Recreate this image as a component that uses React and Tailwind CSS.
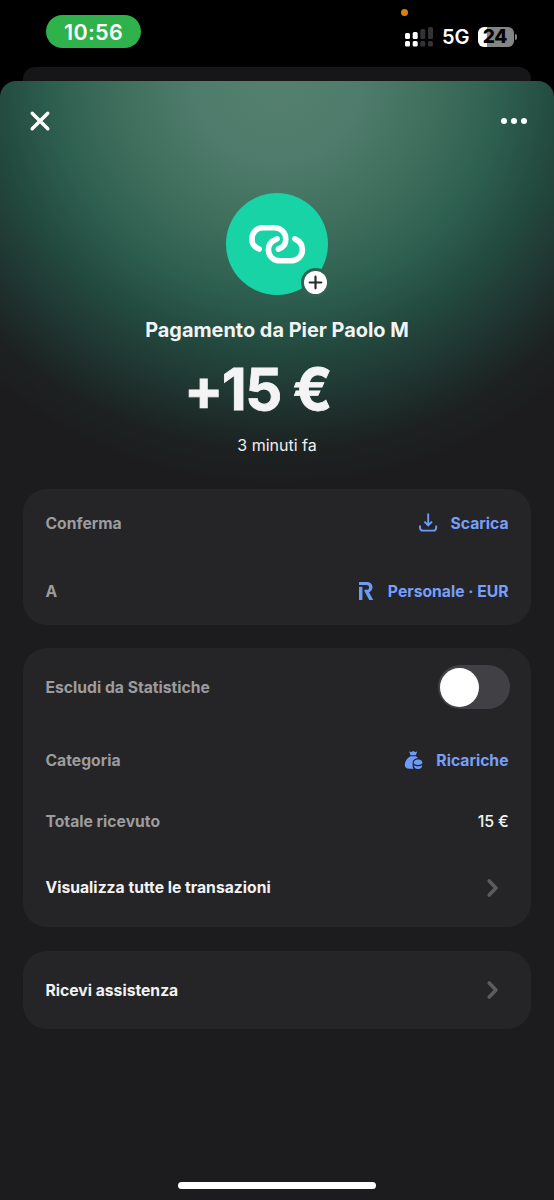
import React, { useState } from "react";

const LinkIcon = () => (
  <svg className="ml-[1px]" width="60" height="44" viewBox="0 0 60 44" fill="none" stroke="#fff" strokeWidth="5.6" strokeLinecap="round">
    <path d="M11.2 27C7.2 25.4 3.9 22.2 3.9 17.2C3.9 10.6 8.6 5.8 15.2 5.8H26C33 5.8 37.8 10.6 37.8 17.2C37.8 22 35.2 25.4 30.4 27" />
    <path d="M29 16.8C24.2 18.6 20.4 22.2 20.4 27.4C20.4 34.2 25.2 38.8 32.2 38.8H42.2C49.2 38.8 54.4 34.4 54.4 28C54.4 22.6 51.2 18.6 46.8 16.8" />
  </svg>
);

const DownloadIcon = () => (
  <svg width="20" height="20" viewBox="0 0 20 20" fill="none" stroke="#6f9bf8" strokeWidth="1.9">
    <path d="M10.2 .6V12M6.4 8.6L10.2 12.3L14 8.6" />
    <path d="M2 12.4V14.4C2 16.8 3 17.6 5 17.6H15.2C17.2 17.6 18.2 16.8 18.2 14.4V12.4" />
  </svg>
);

const RevolutIcon = () => (
  <svg width="16" height="20" viewBox="0 0 16 20" fill="#6f9bf8">
    <path d="M1 5.8H4.4V19H1Z" />
    <path d="M1 1H8.8C12.2 1 14.5 3.2 14.5 6.3C14.5 8.7 13.1 10.5 11 11.3L15.2 19H11.2L6.4 10V8.8H8.6C10.1 8.8 11.1 7.9 11.1 6.4C11.1 4.9 10.2 4 8.6 4H1Z" />
  </svg>
);

const MoneyBagIcon = () => (
  <svg width="20" height="20" viewBox="0 0 20 20" fill="#6f9bf8">
    <path d="M5.2 1.4L7.4 1.9L9.2 .9L11 1.9L13.2 1.4L11.8 5.2H6.6Z" />
    <path d="M6.4 6.2H12L14 8C10.8 8.3 8.6 10 8.6 12.7V15.4C8.6 16.9 9 17.9 9.8 18.8H5.4C2.4 18.8 .8 17.2 .8 14.7C.8 11.4 3.2 8 6.4 6.2Z" />
    <path d="M14 9.5C16.8 9.5 18.4 10.9 18.4 12.6C18.4 14.1 16.8 15 14 15C11.2 15 9.7 14.1 9.7 12.6C9.7 10.9 11.2 9.5 14 9.5Z" />
    <path d="M9.8 15.2C11 16 12.4 16.3 14 16.3C15.8 16.3 17.2 16 18.3 15.2C18.3 17.5 16.6 19 14 19C11.5 19 9.8 17.5 9.8 15.2Z" />
  </svg>
);

const Chevron = () => (
  <svg className="mr-[9px]" width="14" height="20" viewBox="0 0 14 20" fill="none" stroke="#5c5c5f" strokeWidth="3.6" strokeLinecap="round" strokeLinejoin="round">
    <path d="M3.2 3L10 10L3.2 17" />
  </svg>
);

const StatusBar = () => (
  <div className="relative flex h-[67px] items-start justify-between pl-[46px] pr-[37px] pt-[15px]">
    <div className="flex h-[33px] w-[95px] items-center justify-center rounded-full bg-[#2fb14b] pt-[1px] text-[21.5px] font-semibold tracking-[0.3px] text-white">
      10:56
    </div>
    <span className="absolute left-[401px] top-[9px] size-[7px] rounded-full bg-[#d5820f]" />
    <div className="mt-[11px] flex items-center">
      <svg width="28" height="21" viewBox="0 0 28 21">
        <g fill="#fff">
          <rect x="0" y="7" width="5" height="6" rx="1.5" />
          <rect x="7.7" y="6" width="5" height="7" rx="1.5" />
          <rect x="0" y="15" width="5" height="5.5" rx="1.5" />
          <rect x="7.7" y="15" width="5" height="5.5" rx="1.5" />
        </g>
        <g fill="#333335">
          <rect x="15.3" y="3" width="5" height="10" rx="1.5" />
          <rect x="23" y="1" width="5" height="12" rx="1.5" />
          <rect x="15.3" y="15" width="5" height="5.5" rx="1.5" />
          <rect x="23" y="15" width="5" height="5.5" rx="1.5" />
        </g>
      </svg>
      <span className="ml-[9px] mt-[1px] w-[27px] text-[20px] leading-5 font-semibold text-white">5G</span>
      <div className="ml-[9px] flex h-5 w-9 items-center justify-center rounded-[6px] bg-[linear-gradient(90deg,#fff_24%,#858585_24%)] pr-[2px] text-[19px] leading-5 font-extrabold tracking-[-0.3px] text-black">
        24
      </div>
      <span className="ml-[1px] h-[6px] w-[2px] rounded-r-full bg-[#858585]" />
    </div>
  </div>
);

const Row = ({ label, muted = true, height, children }) => (
  <div className={`flex items-center justify-between ${height}`}>
    <span className={`pt-[1px] text-[15.7px] leading-6 font-bold ${muted ? "text-[#9c9c9e]" : "text-[#f2f2f3]"}`}>{label}</span>
    {children}
  </div>
);

const RowLink = ({ icon, text, gap }) => (
  <button className={`flex items-center text-[15.7px] font-bold text-[#779ffa] ${gap}`}>
    {icon}
    <span className="pt-[1px] leading-6">{text}</span>
  </button>
);

const Card = ({ children }) => (
  <section className="rounded-[24px] bg-[#252527] pl-[22.5px] pr-[22.5px]">{children}</section>
);

const App = () => {
  const [excluded, setExcluded] = useState(false);

  return (
    <div className="h-[1200px] w-[554px] overflow-hidden bg-black font-['Inter',sans-serif]">
      <StatusBar />
      <div className="mx-[23px] h-[14px] rounded-t-[12px] bg-[#161518]" />
      <main className="flex h-[1119px] flex-col rounded-t-[16px] bg-[#1c1c1e] bg-[radial-gradient(425px_405px_at_50%_0px,#558070_0%,#4e7b6b_20%,#42705f_35%,#2e6050_52%,#234a3f_66%,#1f332f_80%,#1c2221_91%,#1c1c1e_100%)]">
        <header className="flex h-[80px] items-center justify-between pl-[29px] pr-[27px]">
          <button aria-label="Chiudi">
            <svg width="22" height="22" viewBox="0 0 22 22" stroke="#fff" strokeWidth="3.4" strokeLinecap="round">
              <path d="M3.2 3.2L18.8 18.8M18.8 3.2L3.2 18.8" />
            </svg>
          </button>
          <button aria-label="Altro">
            <svg width="26" height="8" viewBox="0 0 26 8" fill="#fff">
              <circle cx="3" cy="4" r="3" />
              <circle cx="13" cy="4" r="3" />
              <circle cx="23" cy="4" r="3" />
            </svg>
          </button>
        </header>

        <div className="flex h-[328px] flex-col items-center pt-[32px]">
          <div className="relative flex size-[102px] shrink-0 items-center justify-center rounded-full bg-[#18d3a5]">
            <LinkIcon />
            <span className="absolute left-[74.5px] top-[74.5px] flex size-[29px] items-center justify-center rounded-full bg-[#336154]">
              <span className="flex size-[23px] items-center justify-center rounded-full bg-white">
                <svg width="15" height="15" viewBox="0 0 15 15" stroke="#2b2b2d" strokeWidth="2.2" strokeLinecap="round">
                  <path d="M7.5 1.7V13.3M1.7 7.5H13.3" />
                </svg>
              </span>
            </span>
          </div>
          <h1 className="mt-[21px] text-[19.9px] leading-7 font-bold text-[#f1f4f3]">Pagamento da Pier Paolo M</h1>
          <p className="mt-[15px] mr-[39px] text-[58px] leading-[60px] font-bold tracking-[-1.6px] text-[#f4f4f5] [-webkit-text-stroke:0.8px_#f4f4f5]">+15 €</p>
          <p className="mt-[14px] text-[16px] leading-6 text-[#f0f0f1]">3 minuti fa</p>
        </div>

        <div className="flex flex-col px-[23px]">
          <Card>
            <Row label="Conferma" height="h-[68px]">
              <RowLink icon={<DownloadIcon />} text="Scarica" gap="gap-3" />
            </Row>
            <Row label="A" height="h-[68px]">
              <RowLink icon={<RevolutIcon />} text="Personale · EUR" gap="gap-[14px]" />
            </Row>
          </Card>
          <div className="h-[23px]" />

          <Card>
            <Row label="Escludi da Statistiche" height="h-[78px]">
              <button
                role="switch"
                aria-checked={excluded}
                onClick={() => setExcluded(!excluded)}
                className={`mr-[-1.5px] flex h-[44px] w-[72px] items-center rounded-full px-[2px] ${excluded ? "justify-end bg-[#779ffa]" : "bg-[#414045]"}`}
              >
                <span className="size-[39px] rounded-full bg-white" />
              </button>
            </Row>
            <Row label="Categoria" height="h-[68px]">
              <RowLink icon={<MoneyBagIcon />} text="Ricariche" gap="gap-3" />
            </Row>
            <Row label="Totale ricevuto" height="h-[54px]">
              <span className="text-[16px] font-medium tracking-[-0.2px] text-[#f2f2f3]">15 €</span>
            </Row>
            <Row label="Visualizza tutte le transazioni" muted={false} height="h-[79px]">
              <Chevron />
            </Row>
          </Card>
          <div className="h-[24px]" />

          <Card>
            <Row label="Ricevi assistenza" muted={false} height="h-[78px]">
              <Chevron />
            </Row>
          </Card>
        </div>

        <div className="mx-auto mb-[11px] mt-auto h-[7px] w-[198px] rounded-full bg-white" />
      </main>
    </div>
  );
};

export default App;
